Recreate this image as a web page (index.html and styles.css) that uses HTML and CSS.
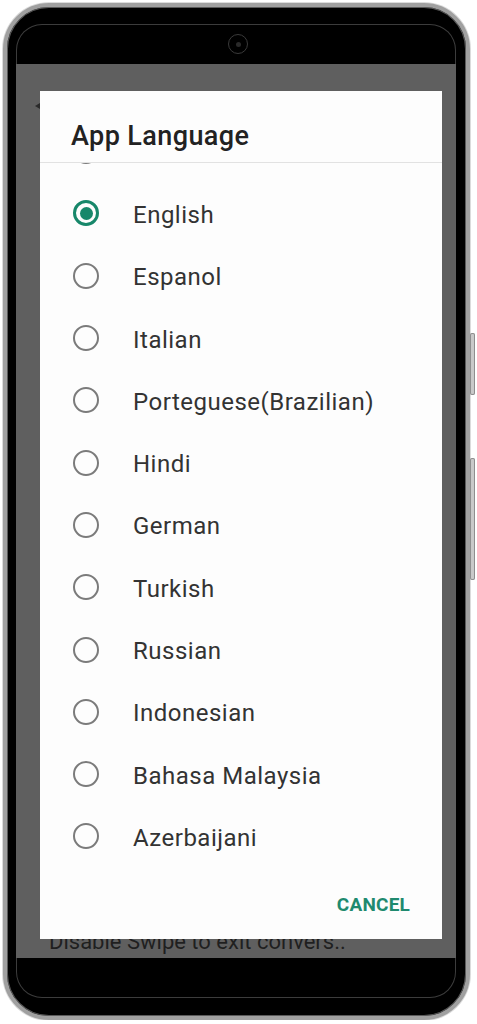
FILE: index.html
```html
<!DOCTYPE html>
<html lang="en">
    <head>
        <meta charset="UTF-8">
        <meta name="viewport" content="width=device-width, initial-scale=1.0">
        <title>App Language</title>
        <link rel="stylesheet" href="styles.css">
    </head>
<body>
    <div class="device">
        <div class="phone">
            <div class="glass">
                <div class="bezel-top">
                    <span class="camera"></span>
                </div>
                <div class="screen">
                    <div class="app-bar">
                        <svg class="back" width="12" height="14" viewBox="0 0 12 14">
                            <path d="M1 7 L11 1 L11 13 Z" fill="#2a2a2a"/>
                        </svg>
                    </div>
                    <div class="app-row">Disable Swipe to exit convers..</div>

                    <!-- language picker dialog -->
                    <div class="dialog">
                        <div class="dialog-title">App Language</div>
                        <div class="lang-list">
                            <div class="lang-inner">
                                <label class="lang"><span class="radio"></span><span class="lang-name hidden-name">Arabic</span></label>
                                <label class="lang"><span class="radio checked"></span><span class="lang-name">English</span></label>
                                <label class="lang"><span class="radio"></span><span class="lang-name">Espanol</span></label>
                                <label class="lang"><span class="radio"></span><span class="lang-name">Italian</span></label>
                                <label class="lang"><span class="radio"></span><span class="lang-name">Porteguese(Brazilian)</span></label>
                                <label class="lang"><span class="radio"></span><span class="lang-name">Hindi</span></label>
                                <label class="lang"><span class="radio"></span><span class="lang-name">German</span></label>
                                <label class="lang"><span class="radio"></span><span class="lang-name">Turkish</span></label>
                                <label class="lang"><span class="radio"></span><span class="lang-name">Russian</span></label>
                                <label class="lang"><span class="radio"></span><span class="lang-name">Indonesian</span></label>
                                <label class="lang"><span class="radio"></span><span class="lang-name">Bahasa Malaysia</span></label>
                                <label class="lang"><span class="radio"></span><span class="lang-name">Azerbaijani</span></label>
                            </div>
                        </div>
                        <div class="dialog-actions">
                            <button class="btn-cancel">CANCEL</button>
                        </div>
                    </div>
                </div>
                <div class="bezel-bottom"></div>
            </div>
        </div>
        <div class="side-keys">
            <span class="key key-short"></span>
            <span class="key key-long"></span>
        </div>
    </div>
</body>
</html>
```

FILE: styles.css
```css
    body {
        margin: 0;
        padding: 0;
        background-color: #ffffff;
        font-family: Roboto, "Liberation Sans", Arial, sans-serif;
    }
    .device {
        display: flex;
        padding: 3px 0 0 3px;
    }
    .phone {
        width: 467px;
        height: 1017px;
        box-sizing: border-box;
        border: 4px solid #a0a0a0;
        border-radius: 46px;
        background-color: #000;
        padding: 17px 10px 18px 9px;
        box-shadow: 0 0 0 1px #dcdcdc, inset 0 0 0 1px #5a5a5a;
    }
    .glass {
        height: 100%;
        border-radius: 26px;
        box-shadow: inset 0 0 0 1px #3c3c3c;
        display: flex;
        flex-direction: column;
        overflow: hidden;
    }
    .bezel-top {
        height: 40px;
        display: flex;
        justify-content: center;
        align-items: center;
        padding-left: 4px;
    }
    .camera {
        width: 20px;
        height: 20px;
        box-sizing: border-box;
        border: 1px solid #3a3a3a;
        border-radius: 50%;
        display: flex;
        align-items: center;
        justify-content: center;
    }
    .camera::after {
        content: "";
        width: 5px;
        height: 5px;
        border-radius: 50%;
        background: #2a2a2a;
    }
    .screen {
        position: relative;
        height: 894px;
        background-color: #5f5f5f;
        display: flex;
        flex-direction: column;
        justify-content: space-between;
    }
    .bezel-bottom {
        flex: 1;
    }
    .app-bar {
        padding: 35px 0 0 18px;
    }
    .back {
        display: block;
    }
    .app-row {
        font-size: 22px;
        line-height: 26px;
        color: #1f1f1f;
        padding: 0 0 3px 33px;
    }
    .dialog {
        position: absolute;
        top: 27px;
        left: 24px;
        width: 402px;
        height: 848px;
        background-color: #fdfdfd;
        display: flex;
        flex-direction: column;
    }
    .dialog-title {
        font-size: 27px;
        font-weight: 500;
        letter-spacing: 0.4px;
        line-height: 30px;
        color: #222;
        padding: 30px 31px 11px;
        border-bottom: 1px solid #e2e2e2;
    }
    .lang-list {
        height: 698px;
        overflow: hidden;
    }
    .lang-inner {
        margin-top: -43px;
    }
    .lang {
        display: flex;
        align-items: center;
        gap: 34px;
        height: 62.3px;
        padding-left: 33px;
        font-size: 24px;
        letter-spacing: 0.5px;
        color: #333;
    }
    .lang-name {
        padding-top: 3px;
    }
    .hidden-name {
        visibility: hidden;
    }
    .radio {
        width: 26px;
        height: 26px;
        box-sizing: border-box;
        border: 2px solid #7b7b7b;
        border-radius: 50%;
        display: flex;
        align-items: center;
        justify-content: center;
    }
    .radio.checked {
        border: 3px solid #17876a;
    }
    .radio.checked::after {
        content: "";
        width: 13px;
        height: 13px;
        border-radius: 50%;
        background-color: #17876a;
    }
    .dialog-actions {
        flex: 1;
        display: flex;
        justify-content: flex-end;
        align-items: flex-start;
        padding: 34px 32px 0 0;
    }
    .btn-cancel {
        font-family: Roboto, "Liberation Sans", Arial, sans-serif;
        font-size: 19px;
        font-weight: 700;
        line-height: 20px;
        color: #1f8a6f;
        background: none;
        border: none;
        padding: 0;
        letter-spacing: 0.2px;
    }
    .side-keys {
        display: flex;
        flex-direction: column;
        gap: 63px;
        padding-top: 330px;
    }
    .key {
        width: 5px;
        border-radius: 2px;
        background: #c9c9c9;
        box-shadow: inset 0 0 0 1px #8e8e8e;
    }
    .key-short {
        height: 62px;
    }
    .key-long {
        height: 122px;
    }
```
